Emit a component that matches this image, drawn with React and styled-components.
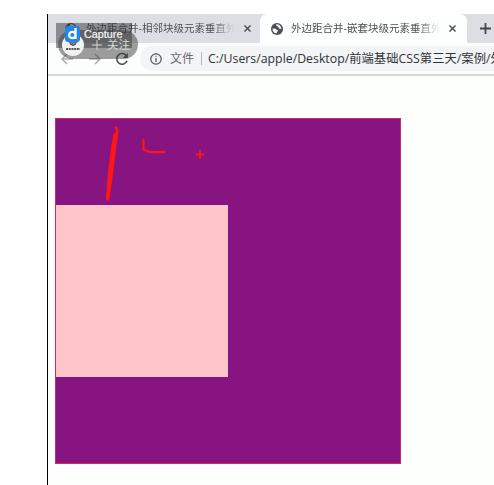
import React from 'react';
import styled, { createGlobalStyle } from 'styled-components';

const Global = createGlobalStyle`
  * { box-sizing: border-box; }
  body { margin: 0; background: #fff; overflow: hidden; }
`;
const Page = styled.div`
  width: 494px; height: 485px; padding: 14px 0 0 47px; overflow: hidden;
  font-family: "Open Sans", "Noto Sans CJK SC", sans-serif;
`;
const Browser = styled.main`
  position: relative; height: 471px; border-left: 1px solid #000; background: #fdfffd; overflow: hidden;
`;
const TabStrip = styled.header`
  display: flex; height: 29px; background: #dcdee4;
`;
const Tab = styled.div`
  display: flex; align-items: center; flex: none;
  width: ${p => p.$active ? 207 : 212}px; height: 29px;
  padding-left: ${p => p.$active ? 11 : 17}px;
  border-radius: 7px 7px 0 0;
  background: ${p => p.$active ? '#fdfefe' : 'transparent'};
`;
const TabTitle = styled.span`
  width: 149px; margin-left: ${p => p.$active ? 8 : 9}px;
  font: 10.5px/15px "Open Sans", "Noto Sans CJK SC", sans-serif;
  color: #4b4e53; white-space: nowrap; overflow: hidden;
  mask-image: linear-gradient(90deg, #000 84%, transparent 100%);
`;
const Close = styled.svg`
  width: 7px; height: 7px; margin-left: 9px; stroke: #45484c; stroke-width: 1.4;
`;
const NewTab = styled.div`
  flex: 1; display: flex; align-items: center; padding-left: 13px;
  svg { flex: none; stroke: #43464b; stroke-width: 1.8; }
`;
const Toolbar = styled.nav`
  display: flex; align-items: center; height: 31px; padding-left: 12px; background: #fcfdfd;
`;
const NavIcon = styled.svg`
  flex: none; width: 14px; height: 14px; margin-right: ${p => p.$gap || 0}px;
  fill: none; stroke: ${p => p.$dark ? '#484b4f' : '#aaaeb2'}; stroke-width: 1.5;
`;
const Address = styled.div`
  display: flex; align-items: center; flex: none; width: 380px; height: 25px; margin-left: 11px; padding-left: 10px;
  border-radius: 13px 0 0 13px; background: #f2f4f5; white-space: nowrap;
  font-size: 12px; line-height: 20px; color: #303338;
  > * { flex: none; }
`;
const FileLabel = styled.span`
  margin-left: 8px; color: #686b70;
`;
const Separator = styled.i`
  width: 1px; height: 13px; margin: 0 6px 0 7px; background: #b4b6b8;
`;
const Url = styled.span`
  font-size: 12.3px; letter-spacing: ${p => p.$cjk ? '0.03px' : '0.01px'};
`;
const Edge = styled.div`
  height: 2px; background: #d5d7d7;
`;
const Content = styled.section`
  padding: 42px 0 0 7px;
`;
const OuterBox = styled.div`
  position: relative; width: 346px; height: 346px; padding-top: 86px;
  border: 1px solid #c52f58; background: #871481;
`;
const InnerBox = styled.div`
  width: 172px; height: 172px; background: #ffc5c8;
`;
const Drawing = styled.svg`
  position: absolute; left: -1px; top: -1px; width: 180px; height: 90px;
  fill: none; stroke: #ff1616; stroke-linecap: round; stroke-linejoin: round;
`;
const Follow = styled.div`
  position: absolute; left: 10px; top: 16px; width: 80px; height: 29px; padding: 0 6px 0 4px;
  border-radius: 15px; background: rgba(60,60,60,.5); color: #d8d8d8;
  display: flex; align-items: center; font-size: 11.5px; line-height: 14px; z-index: 1;
`;
const Avatar = styled.svg`
  flex: none; width: 22px; height: 22px; margin-right: 8px;
`;
const FollowText = styled.span`
  margin-left: 5px; white-space: nowrap;
`;
const CaptureShade = styled.div`
  position: absolute; left: 8px; top: 9px; width: 76px; height: 25px; background: rgba(42,42,48,.46);
`;
const Capture = styled.div`
  position: absolute; z-index: 2; left: 17px; top: 12px;
  display: flex; align-items: flex-start;
`;
const CaptureText = styled.span`
  margin: 1px 0 0 4px; font: 10.8px/14px "Liberation Sans", sans-serif; color: #f6f6f6;
  -webkit-text-stroke: .2px #f6f6f6;
`;

function Globe() {
  return <svg width="12" height="12" viewBox="0 0 12 12">
    <circle cx="6" cy="6" r="6" fill="#4b4e52" />
    <path d="M5.3 1.3c-.5 1-.1 1.6.8 1.7.8.1.4 1 1.2 1.2.9.3.4 1.4 1.2 1.5l1.9.2C10.3 3.6 8.6 1.3 6.5 1.2Z" fill="#fff" opacity=".95" />
    <path d="M1.5 5.5h2.1c1.2 0 1.2 1.1 2.4 1.2 1.1.1 1.3 1.2.5 1.8-.8.5-.4 1.3-1.1 2C3 10.4 1.4 8.4 1.5 5.5Z" fill="#fff" opacity=".95" />
  </svg>;
}

function BrowserTab({ title, active }) {
  return <Tab $active={active}>
    <Globe /><TabTitle $active={active}>{title}</TabTitle>
    <Close viewBox="0 0 7 7"><path d="m.5.5 6 6m0-6-6 6" /></Close>
  </Tab>;
}

export default function App() {
  return <Page><Global /><Browser>
    <TabStrip>
      <BrowserTab title="外边距合并-相邻块级元素垂直外边距" />
      <BrowserTab active title="外边距合并-嵌套块级元素垂直外边距" />
      <NewTab><svg width="11" height="11"><path d="M0 5.5h11M5.5 0v11" /></svg></NewTab>
    </TabStrip>
    <Toolbar>
      <NavIcon $gap={14} viewBox="0 0 14 14"><path d="M13 7H2m5-5L2 7l5 5" /></NavIcon>
      <NavIcon $gap={13} viewBox="0 0 14 14"><path d="M1 7h11M7 2l5 5-5 5" /></NavIcon>
      <NavIcon $dark viewBox="0 0 14 14"><path d="M11.5 4A5.3 5.3 0 1 0 12 8.8" /><path d="M12.8 1v5H7.9Z" fill="#484b4f" stroke="none" /></NavIcon>
      <Address>
        <svg width="12" height="12" fill="none" stroke="#515458"><circle cx="6" cy="6" r="5.2" strokeWidth="1.2" /><path d="M6 5v4M6 2.7v1.1" strokeWidth="1.3" /></svg>
        <FileLabel>文件</FileLabel><Separator /><Url>C:/Users/apple/Desktop/</Url><Url $cjk>前端基础CSS第三天/案例/外</Url>
      </Address>
    </Toolbar>
    <Edge />
    <Content><OuterBox><InnerBox />
      <Drawing viewBox="0 0 180 90">
        <path d="M61 9.5q2 2 .8 6L59 37l-3 25-3 19q-1 2-.8-2l2-23 3-27L60 16" strokeWidth="2.5" />
        <path d="M60 17 55 57l-2 22" strokeWidth="3.2" />
        <path d="M88.5 22v9q0 1.5 3 1.4l3 1.8h15" strokeWidth="2.2" />
        <path d="M141.5 36.5h7M145 33v7" strokeWidth="1.9" />
      </Drawing>
    </OuterBox></Content>
    <CaptureShade />
    <Follow>
      <Avatar viewBox="0 0 22 22"><circle cx="11" cy="11" r="11" fill="#f2f2f2" /><path d="M6 3q5-5 10 0v5q-5 6-10 0Z" fill="#76797c" /><path d="M4 15h14" stroke="#555" strokeWidth="2" strokeDasharray="2 .7" /><path d="M8 10q3 3 6 0" stroke="#333" fill="none" /></Avatar>
      <svg width="10" height="10" stroke="#d2d2d2"><path d="M0 5h10M5 0v10" /></svg><FollowText>关注</FollowText>
    </Follow>
    <Capture>
      <svg width="15" height="16" viewBox="0 0 15 16"><rect width="15" height="16" rx="3" fill="#2186e7" /><path d="M10.5 2v11M10.5 9a3.2 3.2 0 1 0-6.4 0 3.2 3.2 0 1 0 6.4 0" fill="none" stroke="#fff" strokeWidth="2.3" /></svg>
      <CaptureText>Capture</CaptureText>
    </Capture>
  </Browser></Page>;
}
